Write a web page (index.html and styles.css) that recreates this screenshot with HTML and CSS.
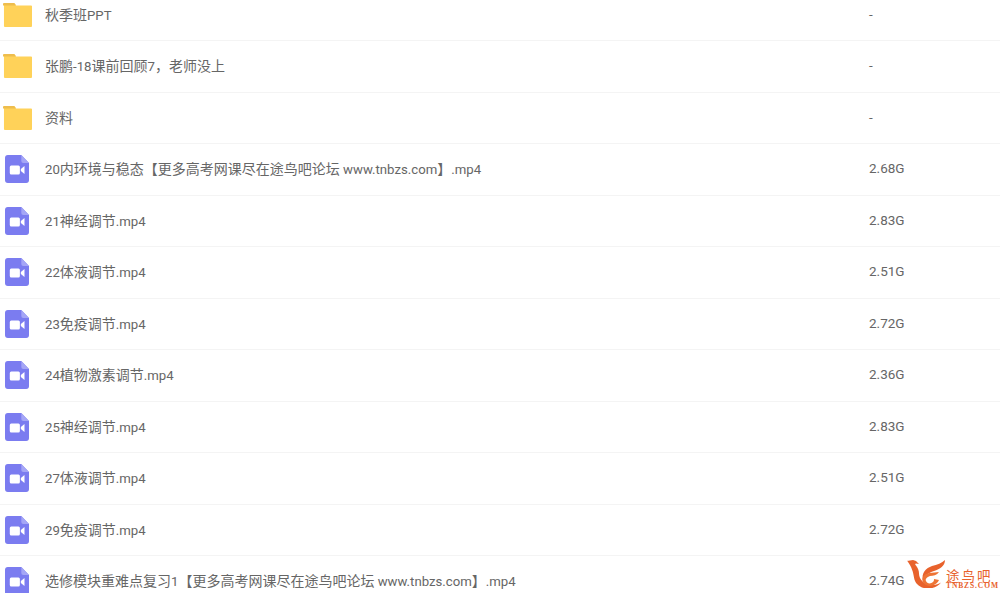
FILE: index.html
```html
<!DOCTYPE html>
<html lang="zh-CN">
<head>
    <meta charset="UTF-8">
    <meta name="viewport" content="width=device-width, initial-scale=1.0">
    <title>文件列表</title>
    <link rel="stylesheet" href="styles.css">
</head>
<body>
    <svg class="defs" width="0" height="0">
        <symbol id="folder" viewBox="0 0 30 25" preserveAspectRatio="none">
            <path d="M1 0h9.500c1.200 0 2 .6 2.800 2.500h15.700a1 1 0 0 1 1 1v20.500a1 1 0 0 1-1 1h-27a1 1 0 0 1-1-1v-23a1 1 0 0 1 1-1z" fill="#ffd259"/>
            <path d="M1 0h9.500c1.200 0 2 .6 2.800 2.500h-13.300v-1.500a1 1 0 0 1 1-1z" fill="#eebd4d"/>
        </symbol>
        <symbol id="video" viewBox="0 0 25 28" preserveAspectRatio="none">
            <path d="M3 0h14l8 8v17a3 3 0 0 1-3 3h-19a3 3 0 0 1-3-3v-22a3 3 0 0 1 3-3z" fill="#7b7cf0"/>
            <path d="M17 0l8 8h-6a2 2 0 0 1-2-2z" fill="#a5a6f6"/>
            <rect x="5" y="10.500" width="10.500" height="9" rx="1.500" fill="#fff"/>
            <path d="M16.500 14l3.800-3v8l-3.800-3z" fill="#fff"/>
        </symbol>
    </svg>

    <ul class="file-list">
        <li class="file-row"><svg class="icon-folder"><use href="#folder"/></svg><span class="file-name">秋季班<span class="lat">PPT</span></span><span class="file-size">-</span></li>
        <li class="file-row"><svg class="icon-folder"><use href="#folder"/></svg><span class="file-name">张鹏<span class="lat">-18</span>课前回顾<span class="lat">7</span>，老师没上</span><span class="file-size">-</span></li>
        <li class="file-row"><svg class="icon-folder"><use href="#folder"/></svg><span class="file-name">资料</span><span class="file-size">-</span></li>
        <li class="file-row"><svg class="icon-video"><use href="#video"/></svg><span class="file-name"><span class="lat">20</span>内环境与稳态【更多高考网课尽在途鸟吧论坛<span class="lat"> www.tnbzs.com</span>】<span class="lat">.mp4</span></span><span class="file-size">2.68G</span></li>
        <li class="file-row"><svg class="icon-video"><use href="#video"/></svg><span class="file-name"><span class="lat">21</span>神经调节<span class="lat">.mp4</span></span><span class="file-size">2.83G</span></li>
        <li class="file-row"><svg class="icon-video"><use href="#video"/></svg><span class="file-name"><span class="lat">22</span>体液调节<span class="lat">.mp4</span></span><span class="file-size">2.51G</span></li>
        <li class="file-row"><svg class="icon-video"><use href="#video"/></svg><span class="file-name"><span class="lat">23</span>免疫调节<span class="lat">.mp4</span></span><span class="file-size">2.72G</span></li>
        <li class="file-row"><svg class="icon-video"><use href="#video"/></svg><span class="file-name"><span class="lat">24</span>植物激素调节<span class="lat">.mp4</span></span><span class="file-size">2.36G</span></li>
        <li class="file-row"><svg class="icon-video"><use href="#video"/></svg><span class="file-name"><span class="lat">25</span>神经调节<span class="lat">.mp4</span></span><span class="file-size">2.83G</span></li>
        <li class="file-row"><svg class="icon-video"><use href="#video"/></svg><span class="file-name"><span class="lat">27</span>体液调节<span class="lat">.mp4</span></span><span class="file-size">2.51G</span></li>
        <li class="file-row"><svg class="icon-video"><use href="#video"/></svg><span class="file-name"><span class="lat">29</span>免疫调节<span class="lat">.mp4</span></span><span class="file-size">2.72G</span></li>
        <li class="file-row"><svg class="icon-video"><use href="#video"/></svg><span class="file-name">选修模块重难点复习<span class="lat">1</span>【更多高考网课尽在途鸟吧论坛<span class="lat"> www.tnbzs.com</span>】<span class="lat">.mp4</span></span><span class="file-size">2.74G</span></li>
    </ul>

    <div class="watermark">
        <svg class="watermark-bird" viewBox="0 0 39 28">
            <path d="M0 1l6-1 3 1 3 3-3-.500c-1 0-1 1 0 2 2 3 3 5 3 8 0 5 4 10 10 11 5 1 9 0 12-2-3 4-8 6-13 6-7 0-13-4-14-11-1-6-2-10-7-17z" fill="#e8622c"/>
            <path d="M38 0c0 6-5 9-11 11-6 2-10 5-11 10-2-8 3-13 9-15 5-1 10-3 13-6z" fill="#e8622c"/>
            <path d="M32 12c-2 3-6 4-9 4-3 1-5 3-4 5 1 3 5 3 7 1 1-1 1-2 1-3l5 1c-2 4-6 6-10 6-5-1-8-5-6-9 2-5 10-4 16-5z" fill="#ee7435"/>
        </svg>
        <div class="watermark-text">
            <span class="watermark-name">途鸟吧</span>
            <span class="watermark-url">TNBZS.COM</span>
        </div>
    </div>
</body>
</html>
```

FILE: styles.css
```css
html, body {
    height: 100%;
}
body {
    margin: 0;
    overflow: hidden;
    position: relative;
    background: #fff;
    font-family: "Noto Sans CJK SC", "Noto Sans", sans-serif;
    font-size: 14px;
    color: #666;
}
.defs {
    display: block;
    height: 0;
}
.file-list {
    list-style: none;
    margin: -10.500px 0 0;
    padding: 0;
}
.file-row {
    display: flex;
    align-items: center;
    height: 51.500px;
    box-sizing: border-box;
    border-bottom: 1px solid #f4f4f4;
}
.icon-folder {
    width: 29px;
    height: 24px;
    margin-left: 3px;
    margin-right: 13px;
    flex: none;
}
.icon-video {
    width: 24px;
    height: 28px;
    margin-left: 5px;
    margin-right: 16px;
    flex: none;
}
.file-name,
.file-size {
    padding-bottom: 2px;
}
.file-name {
    flex: 1;
    white-space: nowrap;
}
.lat {
    font-family: Roboto, sans-serif;
    font-size: 13.200px;
}
.file-size {
    font-family: Roboto, sans-serif;
    font-size: 13.500px;
    width: 131px;
    flex: none;
}
.watermark {
    position: absolute;
    left: 907px;
    top: 560px;
    display: flex;
    align-items: flex-start;
}
.watermark-bird {
    width: 39px;
    height: 28px;
    flex: none;
}
.watermark-text {
    display: flex;
    flex-direction: column;
    margin-top: 8px;
    color: #e8622c;
}
.watermark-name {
    font-size: 13.500px;
    line-height: 14px;
    letter-spacing: 2px;
}
.watermark-url {
    font-family: "Liberation Serif", serif;
    font-size: 7.500px;
    line-height: 8px;
    font-weight: bold;
    letter-spacing: 0.900px;
    white-space: nowrap;
}
```
